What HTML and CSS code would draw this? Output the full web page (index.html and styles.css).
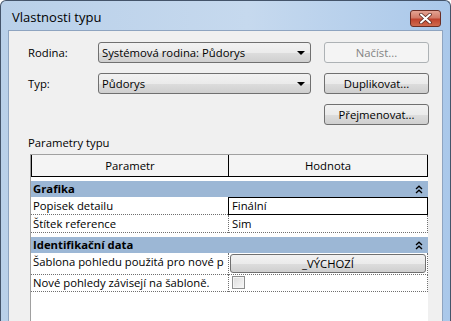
FILE: index.html
```html
<!DOCTYPE html>
<html lang="cs">
<head>
<meta charset="utf-8">
<title>Vlastnosti typu</title>
<link rel="stylesheet" href="styles.css">
</head>
<body>
<div class="window">
  <div class="titlebar">
    <span class="title">Vlastnosti typu</span>
    <span class="close">
      <svg width="13" height="11" viewBox="0 0 13 11">
        <path d="M2 1.5 L11 9.5 M11 1.5 L2 9.5" stroke="#5a2a22" stroke-width="3.6" stroke-linecap="round"/>
        <path d="M2 1.5 L11 9.5 M11 1.5 L2 9.5" stroke="#ffffff" stroke-width="2" stroke-linecap="round"/>
      </svg>
    </span>
  </div>
  <div class="client">
    <div class="form">
      <span class="label">Rodina:</span>
      <div class="combo"><span>Systémová rodina: Půdorys</span><span class="arrow"></span></div>
      <div class="btn disabled">Načíst...</div>
      <span class="label">Typ:</span>
      <div class="combo"><span>Půdorys</span><span class="arrow"></span></div>
      <div class="btn">Duplikovat...</div>
      <span></span>
      <span></span>
      <div class="btn">Přejmenovat...</div>
    </div>
    <div class="section-label">Parametry typu</div>
    <div class="table">
      <div class="thead">
        <div class="th">Parametr</div>
        <div class="th last">Hodnota</div>
      </div>
      <div class="band">
        <span>Grafika</span>
        <svg class="chev" width="8" height="9" viewBox="0 0 8 9"><path d="M1 4 L4 1.2 L7 4 M1 8 L4 5.2 L7 8" fill="none" stroke="#000" stroke-width="1.3"/></svg>
      </div>
      <div class="row">
        <div class="name">Popisek detailu</div>
        <div class="value editing">Finální</div>
      </div>
      <div class="row">
        <div class="name">Štítek reference</div>
        <div class="value">Sim</div>
      </div>
      <div class="band">
        <span>Identifikační data</span>
        <svg class="chev" width="8" height="9" viewBox="0 0 8 9"><path d="M1 4 L4 1.2 L7 4 M1 8 L4 5.2 L7 8" fill="none" stroke="#000" stroke-width="1.3"/></svg>
      </div>
      <div class="row tall">
        <div class="name">Šablona pohledu použitá pro nové p</div>
        <div class="value"><div class="cellbtn">_VÝCHOZÍ</div></div>
      </div>
      <div class="row">
        <div class="name">Nové pohledy závisejí na šabloně.</div>
        <div class="value"><span class="check"></span></div>
      </div>
    </div>
  </div>
</div>
</body>
</html>
```
FILE: styles.css
```css
* { box-sizing: border-box; }
body {
  margin: 0;
  background: #ffffff;
  font-family: "Open Sans", "Noto Sans", sans-serif;
  font-size: 11.3px;
  color: #000;
}
.window {
  width: 451px;
  height: 321px;
  display: flex;
  flex-direction: column;
  border: 1px solid #44546a;
  border-bottom: none;
  border-radius: 6px 6px 0 0;
  background: linear-gradient(to right, #b9d0e9 0%, #c6d9ee 55%, #aac8ea 100%);
  overflow: hidden;
}
.titlebar {
  height: 29px;
  flex: none;
  display: flex;
  align-items: flex-start;
  justify-content: space-between;
  padding: 0 9px 0 11px;
}
.title {
  font-size: 13px;
  line-height: 15px;
  margin-top: 9px;
  color: #000;
}
.close {
  margin-top: 9px;
  width: 31px;
  height: 17px;
  border: 1px solid #6b2e25;
  border-radius: 3px;
  background: linear-gradient(#e4a393 0%, #d27b68 45%, #c0432e 55%, #cf6b4f 100%);
  display: flex;
  align-items: center;
  justify-content: center;
}
.client {
  flex: 1;
  margin: 0 7px;
  background: #f0f0f0;
  border: 1px solid #8ea4c0;
  border-bottom: none;
  padding: 11px 0 0 19px;
  display: flex;
  flex-direction: column;
}
.form {
  display: grid;
  grid-template-columns: 57px 213px 105px;
  grid-auto-rows: 21px;
  column-gap: 13px;
  row-gap: 10px;
  align-items: center;
}
.label { line-height: 14px; }
.combo {
  height: 21px;
  border: 1px solid #707070;
  border-radius: 3px;
  background: linear-gradient(#f2f2f2 0%, #ebebeb 50%, #dddddd 51%, #cfcfcf 100%);
  display: flex;
  align-items: center;
  justify-content: space-between;
  padding: 0 4px 0 3px;
  line-height: 14px;
}
.arrow {
  width: 0;
  height: 0;
  border-left: 4px solid transparent;
  border-right: 4px solid transparent;
  border-top: 4px solid #000;
  margin-right: 1px;
}
.btn {
  height: 21px;
  border: 1px solid #707070;
  border-radius: 3px;
  background: linear-gradient(#f2f2f2 0%, #ebebeb 50%, #dddddd 51%, #cfcfcf 100%);
  display: flex;
  align-items: center;
  justify-content: center;
  line-height: 14px;
}
.btn.disabled {
  border-color: #adb2b5;
  background: #f4f4f4;
  color: #838383;
}
.section-label {
  margin-top: 11px;
  line-height: 14px;
}
.table {
  margin: 4px 0 0 2px;
  width: 398px;
  flex: 1;
  background: #ffffff;
  border-top: 1px solid #a0a0a0;
  border-left: 1px solid #a0a0a0;
}
.thead {
  display: grid;
  grid-template-columns: 197px 1fr;
  height: 22px;
  background: #f4f4f4;
  border-left: 1px solid #000;
  border-bottom: 1px solid #000;
}
.th {
  display: flex;
  align-items: center;
  justify-content: center;
  border-right: 1px solid #000;
}
.band {
  margin-top: 4px;
  height: 16px;
  background: #9cb7d5;
  display: flex;
  align-items: center;
  justify-content: space-between;
  padding: 0 5px 0 2px;
  font-weight: bold;
  line-height: 14px;
}
.row {
  display: grid;
  grid-template-columns: 197px 1fr;
  height: 18px;
}
.row.tall { height: 21px; }
.name {
  padding-left: 2px;
  white-space: nowrap;
  overflow: hidden;
  line-height: 17px;
  border-bottom: 1px dotted #6f6f6f;
}
.value {
  padding-left: 3px;
  line-height: 16px;
  border-left: 1px dotted #6f6f6f;
  border-right: 1px dotted #6f6f6f;
  border-bottom: 1px dotted #6f6f6f;
  display: flex;
  align-items: center;
}
.value.editing {
  border: 1px solid #000;
}
.row.tall .value { padding: 1px; }
.cellbtn {
  flex: 1;
  height: 19px;
  border: 1px solid #707070;
  border-radius: 3px;
  background: linear-gradient(#f2f2f2 0%, #ebebeb 50%, #dddddd 51%, #cfcfcf 100%);
  display: flex;
  align-items: center;
  justify-content: center;
}
.check {
  width: 13px;
  height: 13px;
  border: 1px solid #8e8f8f;
  background: linear-gradient(135deg, #dcdcdc, #f8f8f8);
  box-shadow: inset 0 0 0 1px #f4f4f4;
}
```
